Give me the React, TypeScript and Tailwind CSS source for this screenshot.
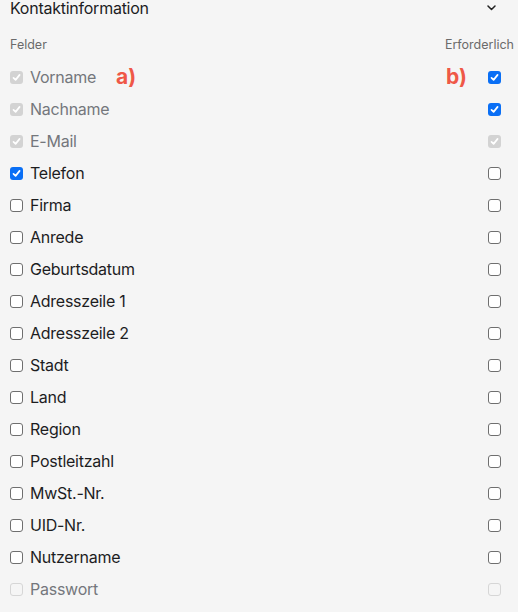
import React from "react";

type Field = {
  label: string;
  on: boolean;
  lock?: boolean;
  req: boolean;
  reqLock?: boolean;
};

const fields: Field[] = [
  { label: "Vorname", on: true, lock: true, req: true },
  { label: "Nachname", on: true, lock: true, req: true },
  { label: "E-Mail", on: true, lock: true, req: true, reqLock: true },
  { label: "Telefon", on: true, req: false },
  { label: "Firma", on: false, req: false },
  { label: "Anrede", on: false, req: false },
  { label: "Geburtsdatum", on: false, req: false },
  { label: "Adresszeile 1", on: false, req: false },
  { label: "Adresszeile 2", on: false, req: false },
  { label: "Stadt", on: false, req: false },
  { label: "Land", on: false, req: false },
  { label: "Region", on: false, req: false },
  { label: "Postleitzahl", on: false, req: false },
  { label: "MwSt.-Nr.", on: false, req: false },
  { label: "UID-Nr.", on: false, req: false },
  { label: "Nutzername", on: false, req: false },
  { label: "Passwort", on: false, lock: true, req: false, reqLock: true },
];

function Box({ checked, disabled }: { checked: boolean; disabled?: boolean }) {
  if (checked) {
    return (
      <span
        className={
          "w-[13px] h-[13px] rounded-[3px] flex justify-center place-items-center shrink-0 " +
          (disabled ? "bg-[#d3d3d3]" : "bg-[#0a6ff5]")
        }
      >
        <svg width="9" height="9" viewBox="0 0 9 9" fill="none">
          <path
            d="M1.5 4.8 L3.6 6.9 L7.6 1.9"
            stroke="white"
            strokeWidth="1.7"
            strokeLinecap="round"
            strokeLinejoin="round"
          />
        </svg>
      </span>
    );
  }
  return (
    <span
      className={
        "block w-[13px] h-[13px] rounded-[3px] border shrink-0 " +
        (disabled ? "border-[#d6d6d6] bg-[#f5f5f5]" : "border-[#6f6f6f] bg-white")
      }
    />
  );
}

export default function App() {
  return (
    <div className="w-[518px] h-[612px] bg-[#f5f5f5] font-['Inter',sans-serif] overflow-hidden">
      <div className="flex justify-between place-items-center pl-[10px] pr-[22px] -mt-[2px] h-5">
        <span className="text-[16px] leading-5 text-[#1d1d1f] tracking-[-0.25px]">
          Kontaktinformation
        </span>
        <svg width="9" height="6" viewBox="0 0 9 6" fill="none">
          <path d="M1 1 L4.5 4.5 L8 1" stroke="#222" strokeWidth="1.5" strokeLinecap="round" strokeLinejoin="round" />
        </svg>
      </div>
      <div className="flex justify-between pl-[10px] pr-[4px] mt-[19px] text-[12.5px] leading-4 text-[#6b6b6b]">
        <span>Felder</span>
        <span>Erforderlich</span>
      </div>
      <ul className="mt-[8px]">
        {fields.map((f, i) => (
          <li key={f.label} className="relative flex place-items-center h-8">
            <div className="flex-1 flex place-items-center pl-[10px] gap-[7px]">
              <Box checked={f.on} disabled={f.lock} />
              <span
                className={
                  "text-[16px] leading-5 tracking-[-0.25px] " +
                  (f.lock ? "text-[#74777c]" : "text-[#1d1d1f]")
                }
              >
                {f.label}
              </span>
            </div>
            <div className="flex pr-[17px]">
              <Box checked={f.req} disabled={f.reqLock} />
            </div>
            {i === 0 && (
              <>
                <span className="absolute left-[116px] top-[4px] text-[21px] leading-6 font-bold text-[#ef5847]">
                  a)
                </span>
                <span className="absolute left-[446px] top-[4px] text-[21px] leading-6 font-bold text-[#ef5847]">
                  b)
                </span>
              </>
            )}
          </li>
        ))}
      </ul>
    </div>
  );
}
